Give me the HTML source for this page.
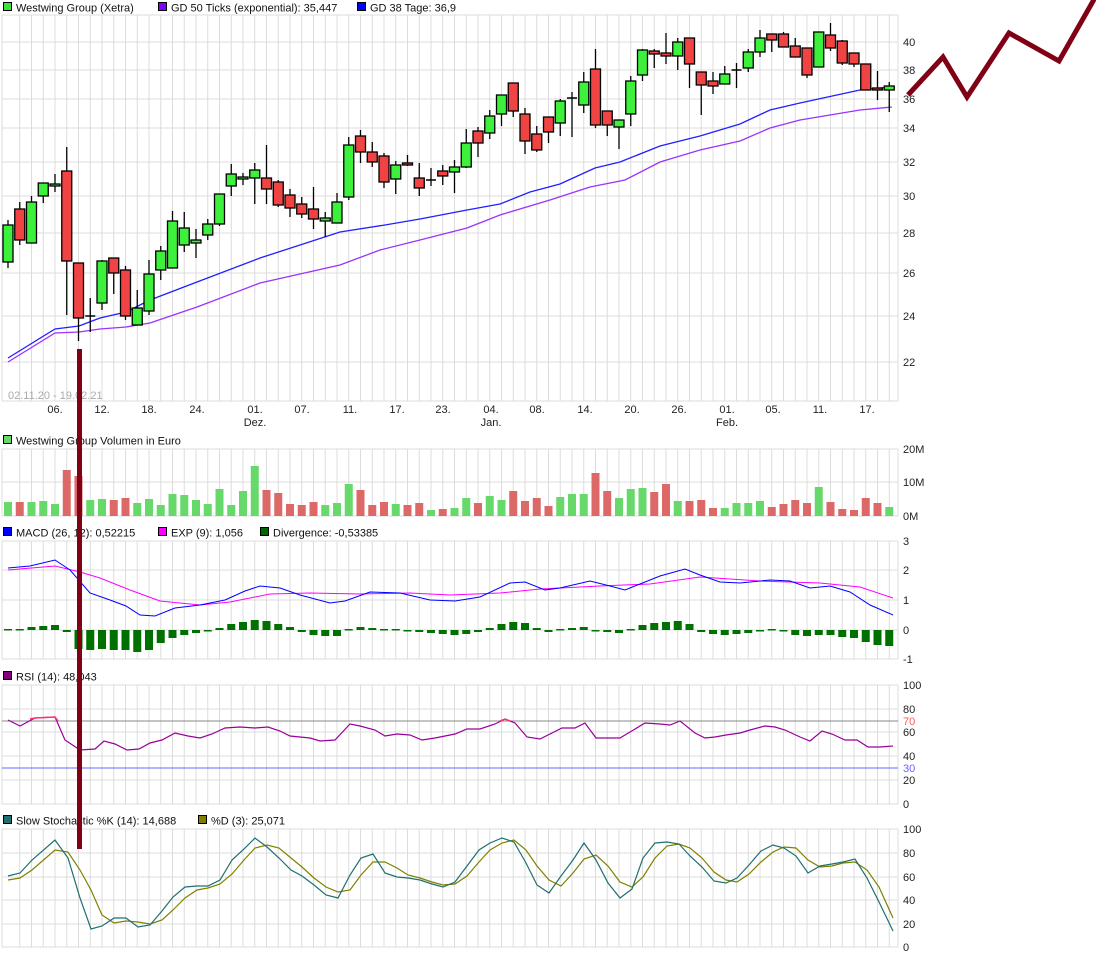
<!DOCTYPE html>
<html><head><meta charset="utf-8"><style>
html,body{margin:0;padding:0;background:#fff;width:1096px;height:958px;overflow:hidden}
svg{display:block;font-family:"Liberation Sans",Arial,sans-serif}
</style></head><body>
<svg id="s" width="1096" height="958" xmlns="http://www.w3.org/2000/svg"></svg>
<script>
const S=document.getElementById('s');let h='';
const X0=8,DX=11.75,N=76,L=2,R=898;
const cx=i=>X0+DX*i;
function grid(top,bot,ys){
  for(let i=1;i<N;i++){h+=`<line x1="${cx(i)}" y1="${top}" x2="${cx(i)}" y2="${bot}" stroke="#dcdcdc" stroke-width="1"/>`;}
  h+=`<line x1="${L}" y1="${top}" x2="${L}" y2="${bot}" stroke="#dcdcdc"/>`;
  h+=`<line x1="${R}" y1="${top}" x2="${R}" y2="${bot}" stroke="#dcdcdc"/>`;
  ys.forEach(y=>h+=`<line x1="${L}" y1="${y}" x2="${R}" y2="${y}" stroke="#dcdcdc"/>`);
}
function lab(y,t){h+=`<text x="903" y="${y+4}" font-size="11" fill="#222">${t}</text>`;}
function leg(x,y,c,t){y+=3;h+=`<rect x="${x+0.5}" y="${y-8.5}" width="8" height="8" fill="${c}" stroke="#000" stroke-width="1"/><text x="${x+13}" y="${y+0.5}" font-size="11" fill="#111">${t}</text>`;}
function pl(pts,c,w){h+=`<polyline points="${pts.map(p=>p.join(',')).join(' ')}" fill="none" stroke="${c}" stroke-width="${w||1}"/>`;}
// main
grid(15,401,[15,42,70,99,128,162,196,233,273,316,362,401]);
[[42,40],[70,38],[99,36],[128,34],[162,32],[196,30],[233,28],[273,26],[316,24],[362,22]].forEach(a=>lab(a[0],a[1]));
leg(3,8,'#3de03d','Westwing Group (Xetra)');leg(158,8,'#7f00ff','GD 50 Ticks (exponential): 35,447');leg(357,8,'#0000ff','GD 38 Tage: 36,9');
h+=`<text x="8" y="399" font-size="11" fill="#aaa">02.11.20 - 19.02.21</text>`;
[[55,'06.'],[102,'12.'],[149,'18.'],[197,'24.'],[255,'01.'],[302,'07.'],[350,'11.'],[397,'17.'],[443,'23.'],[491,'04.'],[537,'08.'],[585,'14.'],[632,'20.'],[679,'26.'],[727,'01.'],[773,'05.'],[820,'11.'],[867,'17.']].forEach(a=>h+=`<text x="${a[0]}" y="413" font-size="11" fill="#222" text-anchor="middle">${a[1]}</text>`);
[[255,'Dez.'],[491,'Jan.'],[727,'Feb.']].forEach(a=>h+=`<text x="${a[0]}" y="426" font-size="11" fill="#222" text-anchor="middle">${a[1]}</text>`);
pl([[8,358],[55,329],[79,326],[100,318],[126,312],[150,300],[197,282],[260,258],[340,232],[385,225],[420,219],[467,210],[500,204],[530,192],[560,184],[595,168],[620,162],[660,146],[700,136],[740,124],[770,110],[800,103],[860,90],[890,87]],'#2020ff',1.3);
pl([[8,362],[55,333],[79,332],[100,329],[126,327],[150,323],[197,307],[260,283],[340,265],[380,250],[420,240],[467,228],[500,215],[550,200],[590,187],[625,180],[660,162],[700,150],[740,141],[770,128],[800,120],[860,110],[892,107]],'#9933ff',1.3);
const C=[['g',225,262,220,268],['r',209,240,202,245],['g',202,243,196,243],['g',183,196,183,203],['g',184,186,174,192],['r',171,261,147,315],['r',263,318,263,341],['k',316,316,298,332],['g',261,303,260,310],['r',258,273,258,294],['r',270,316,266,320],['g',308,325,290,325],['g',274,311,260,315],['g',251,270,246,280],['g',221,268,211,268],['g',228,245,212,252],['g',240,243,229,258],['g',224,235,219,240],['g',194,224,194,226],['g',174,186,164,196],['g',177,179,173,185],['g',170,178,163,204],['r',178,189,145,204],['r',182,205,180,207],['r',195,208,189,217],['r',204,214,197,218],['r',209,219,187,229],['g',218,221,212,237],['g',202,223,193,223],['g',145,197,137,200],['r',136,152,130,163],['r',152,162,142,167],['r',156,182,153,188],['g',165,179,161,194],['r',163,165,155,166],['r',178,188,163,196],['k',180,180,168,186],['r',171,176,165,185],['g',167,172,160,193],['g',143,167,129,168],['r',131,143,127,157],['g',116,133,110,139],['g',95,114,95,126],['r',83,111,83,117],['r',114,141,108,154],['r',134,150,126,152],['r',117,132,117,143],['g',101,123,99,136],['k',98,98,92,137],['g',82,105,72,113],['r',69,125,49,128],['r',111,125,111,136],['g',120,127,120,149],['g',81,114,76,126],['g',50,75,49,81],['r',51,54,49,68],['r',53,56,33,64],['g',42,56,38,70],['r',38,64,38,88],['r',72,85,72,115],['r',81,86,72,94],['g',74,84,66,84],['k',70,70,63,88],['g',52,68,49,72],['g',38,52,30,57],['r',34,40,34,52],['r',34,47,32,47],['r',46,57,38,57],['r',48,75,48,78],['g',32,67,32,67],['r',35,48,23,51],['r',41,63,40,65],['r',53,64,53,67],['r',64,90,64,90],['r',88,90,71,100],['g',86,90,82,112]];
C.forEach((c,i)=>{const x=cx(i);h+=`<line x1="${x}" y1="${c[3]}" x2="${x}" y2="${c[4]}" stroke="#000" stroke-width="1.3"/>`;
 if(c[0]=='k'){h+=`<line x1="${x-5}" y1="${c[1]}" x2="${x+5}" y2="${c[1]}" stroke="#000" stroke-width="1.5"/>`;}
 else{h+=`<rect x="${x-5}" y="${c[1]}" width="10" height="${Math.max(2,c[2]-c[1])}" fill="${c[0]=='g'?'#3cf03c':'#f04343'}" stroke="#000" stroke-width="1.3"/>`;}});
// volume
leg(3,441,'#66d96a','Westwing Group Volumen in Euro');
grid(449,516,[449,482,516]);lab(449,'20M');lab(482,'10M');lab(516,'0M');
const V=[502,502,502,501,504,470,476,500,499,500,498,503,499,505,494,495,500,504,489,505,491,466,490,493,504,505,502,505,503,484,490,505,502,504,505,503,510,509,508,498,503,496,500,491,501,498,506,497,494,494,473,491,498,489,488,492,484,501,501,500,508,508,503,503,501,507,504,500,503,487,502,509,510,498,503,507];
V.forEach((v,i)=>{const g=C[i][0]!='r';h+=`<rect x="${cx(i)-4}" y="${v}" width="8" height="${516-v}" fill="${g?'#66d96a':'#dc6868'}"/>`;});
// MACD
leg(3,533,'#0000ff','MACD (26, 12): 0,52215');leg(158,533,'#ff00ff','EXP (9): 1,056');leg(260,533,'#006600','Divergence: -0,53385');
grid(541,659,[541,570,600,630,659]);lab(541,'3');lab(570,'2');lab(600,'1');lab(630,'0');lab(659,'-1');
const D=[1,1,3,4,5,-2,-19,-20,-19,-20,-20,-22,-20,-13,-8,-5,-3,-1,2,6,8,10,9,6,3,-2,-5,-6,-6,1,3,2,1,1,-1,-2,-3,-4,-5,-4,-2,2,6,8,7,2,-2,1,2,3,-1,-2,-3,1,5,7,8,9,6,-2,-4,-5,-4,-3,-1,1,-1,-5,-6,-5,-5,-7,-8,-12,-15,-16];
D.forEach((d,i)=>{const y=d>0?630-d:630;h+=`<rect x="${cx(i)-4}" y="${y}" width="8" height="${Math.max(1.5,Math.abs(d))}" fill="#007000"/>`;});
pl([[8,570],[55,566],[80,572],[100,578],[130,590],[160,601],[200,605],[230,602],[270,594],[310,593],[360,594],[410,593],[450,595],[500,593],[540,589],[600,586],[650,584],[700,577],[760,581],[820,583],[860,587],[893,598]],'#ff00ff');
pl([[8,568],[30,566],[55,560],[70,570],[90,593],[110,600],[126,606],[140,615],[155,616],[175,608],[200,605],[225,600],[245,591],[260,586],[280,588],[300,595],[330,603],[345,601],[370,592],[400,593],[430,600],[455,601],[480,597],[510,583],[525,582],[545,590],[560,588],[590,581],[610,586],[625,590],[640,584],[660,576],[685,569],[700,575],[720,582],[740,583],[770,580],[790,581],[810,588],[830,586],[850,592],[870,605],[893,615]],'#0000ff');
// RSI
leg(3,677,'#800080','RSI (14): 48,043');
grid(685,804,[685,709,732,756,780,804]);
h+=`<line x1="${L}" y1="721" x2="${R}" y2="721" stroke="#888"/><line x1="${L}" y1="768" x2="${R}" y2="768" stroke="#6666ff"/>`;
lab(685,'100');lab(709,'80');h+=`<text x="903" y="725" font-size="11" fill="#ff5a5a">70</text>`;lab(732,'60');lab(756,'40');h+=`<text x="903" y="772" font-size="11" fill="#6666ff">30</text>`;lab(780,'20');lab(804,'0');
pl([[8,720],[20,726],[35,718],[55,717],[65,740],[80,750],[95,749],[104,741],[115,744],[127,750],[139,749],[150,743],[162,740],[175,733],[188,736],[200,738],[212,734],[225,728],[240,727],[255,728],[268,727],[280,731],[290,736],[310,738],[320,741],[335,740],[350,724],[360,726],[375,730],[385,736],[397,734],[410,735],[422,740],[435,738],[455,734],[467,729],[480,729],[495,724],[505,719],[515,723],[527,737],[540,739],[550,734],[562,728],[575,728],[585,723],[596,738],[608,738],[620,738],[630,732],[645,723],[660,724],[670,725],[680,721],[695,733],[705,738],[715,737],[726,735],[740,733],[750,730],[765,726],[775,727],[785,730],[800,737],[810,741],[822,731],[832,734],[845,740],[857,740],[868,747],[880,747],[893,746]],'#990099',1.2);
pl([[30,719],[35,718],[55,717],[58,721]],'#ff3366',1.5);pl([[500,721],[505,719],[510,721]],'#ff3366',1.5);
// Stoch
leg(3,821,'#1f6f6f','Slow Stochastic %K (14): 14,688');leg(198,821,'#808000','%D (3): 25,071');
grid(829,947,[829,853,877,900,924,947]);
lab(829,'100');lab(853,'80');lab(877,'60');lab(900,'40');lab(924,'20');lab(947,'0');
pl([[8,880],[20,878],[32,870],[55,850],[68,852],[80,870],[91,890],[102,915],[114,923],[126,921],[138,922],[150,924],[162,920],[173,910],[185,898],[197,890],[208,888],[220,884],[232,874],[244,860],[255,848],[267,845],[279,848],[291,858],[302,867],[314,878],[326,887],[338,892],[350,890],[361,875],[373,862],[385,862],[397,868],[408,875],[420,878],[432,882],[443,885],[455,884],[467,876],[479,862],[490,850],[502,843],[514,840],[526,850],[537,866],[549,880],[561,886],[573,873],[584,859],[596,855],[608,866],[620,882],[632,887],[643,877],[655,858],[667,846],[679,844],[690,848],[702,858],[714,872],[726,880],[737,882],[749,874],[761,862],[773,852],[784,847],[796,848],[808,860],[820,867],[832,866],[843,863],[855,862],[867,870],[879,887],[893,918]],'#808000',1.2);
pl([[8,876],[20,873],[32,860],[55,840],[68,858],[80,898],[91,929],[102,926],[114,918],[126,918],[138,927],[150,925],[162,911],[173,897],[185,887],[197,886],[208,886],[220,880],[232,860],[244,849],[255,838],[267,847],[279,858],[291,870],[302,876],[314,885],[326,895],[338,898],[350,875],[361,858],[373,854],[385,873],[397,877],[408,878],[420,880],[432,884],[443,887],[455,882],[467,866],[479,850],[490,843],[502,838],[514,842],[526,863],[537,885],[549,893],[561,876],[573,860],[584,843],[596,860],[608,883],[620,898],[632,889],[643,858],[655,843],[667,842],[679,844],[690,856],[702,867],[714,881],[726,883],[737,878],[749,865],[761,851],[773,845],[784,848],[796,856],[808,873],[820,866],[832,864],[843,862],[855,859],[867,878],[879,902],[893,931]],'#1f6f6f',1.2);
// annotations
h+=`<rect x="77" y="349" width="5" height="500" fill="#800015"/>`;
h+=`<polyline points="908,95 943,57 967,97 1009,33 1059,61 1096,-4" fill="none" stroke="#800015" stroke-width="5"/>`;
S.innerHTML=h;
</script>
</body></html>
